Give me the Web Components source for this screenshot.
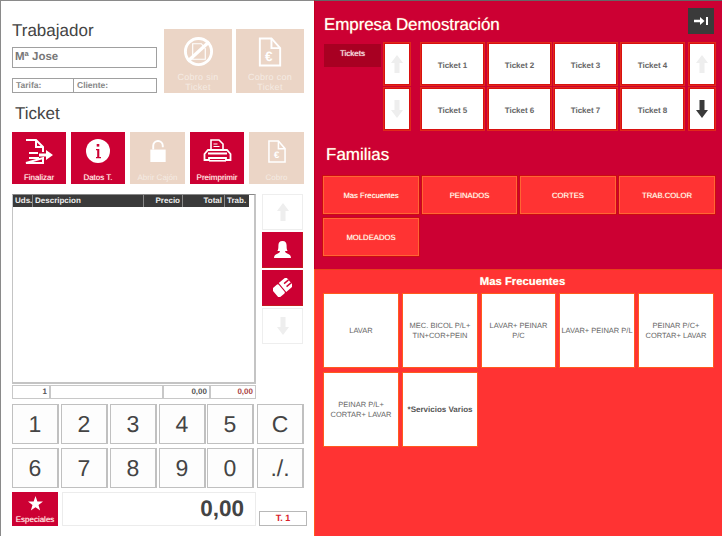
<!DOCTYPE html>
<html lang="es">
<head>
<meta charset="utf-8">
<title>TPV</title>
<style>
  html, body { margin: 0; padding: 0; background: #fff; }
  body { width: 722px; height: 536px; overflow: hidden; font-family: "Liberation Sans", Arial, sans-serif; text-rendering: geometricPrecision; }
</style>
</head>
<body>
<pos-app></pos-app>

<script>
/* Iconos compartidos */
const ICONS = {
  noticket: `<svg width="31" height="31" viewBox="0 0 32 32"><circle cx="16" cy="16" r="13.5" fill="none" stroke="currentColor" stroke-width="3"/><path d="M10 8h9l4 5v11H10z" fill="none" stroke="currentColor" stroke-width="1.2"/><path d="M5 26L27 6" stroke="currentColor" stroke-width="3.4"/></svg>`,
  euroDoc: `<svg width="24" height="30" viewBox="0 0 24 31"><path d="M1.5 1.5h12l9 10v18h-21z" fill="none" stroke="currentColor" stroke-width="2"/><path d="M13.500 1.500v10h9" fill="none" stroke="currentColor" stroke-width="2"/><text x="11" y="25" text-anchor="middle" font-family="Liberation Sans" font-weight="700" font-size="14" fill="currentColor">€</text></svg>`,
  euroDocSmall: `<svg width="18" height="23" viewBox="0 0 19 24"><path d="M1 1h10l7 8v14H1z" fill="none" stroke="currentColor" stroke-width="1.6"/><path d="M11 1v8h7" fill="none" stroke="currentColor" stroke-width="1.6"/><text x="9" y="19" text-anchor="middle" font-family="Liberation Sans" font-weight="700" font-size="10" fill="currentColor">€</text></svg>`,
  finish: `<svg width="29" height="25" viewBox="0 0 29 25"><path d="M1 1h10l7 7v5M18 19v5H1z" fill="none" stroke="currentColor" stroke-width="2"/><path d="M11 1v7h7" fill="none" stroke="currentColor" stroke-width="2"/><path d="M4 13h9v2H4zM4 18h10v2H4z" fill="currentColor"/><path d="M14 14.500h7V11l7 5-7 5v-3.500h-7z" fill="currentColor"/></svg>`,
  info: `<svg width="24" height="24" viewBox="0 0 24 24"><circle cx="12" cy="12" r="12" fill="currentColor"/><rect x="10.700" y="5" width="2.600" height="2.600" fill="#cc0033"/><path d="M10 10h3.300v8H15v1.300H10V18h1.200v-6.700H10z" fill="#cc0033"/></svg>`,
  lock: `<svg width="16" height="22" viewBox="0 0 16 23"><path d="M3 10V6a5 5 0 0 1 10 0v1.500" fill="none" stroke="currentColor" stroke-width="2"/><rect x="0" y="10" width="16" height="13" fill="currentColor"/></svg>`,
  printer: `<svg width="29" height="24" viewBox="0 0 29 24"><path d="M8 10V1h8l4 4v5" fill="none" stroke="currentColor" stroke-width="1.600"/><path d="M10.500 5h4M10.500 7.500h6" stroke="currentColor" stroke-width="1.200"/><path d="M5 11h19l3.500 4v6H23v-2H6v2H1.500v-6z" fill="none" stroke="currentColor" stroke-width="1.800"/><rect x="5" y="13.500" width="19" height="2" fill="currentColor"/><rect x="6" y="21" width="17" height="1.600" fill="currentColor"/></svg>`,
  person: `<svg width="17" height="17" viewBox="0 0 17 17"><path d="M8.500 0C11.500 0 12.600 2 12.600 4.500c0 2.500.2 4.500 1 5.500h-2.500c0 1.500 1 2 3 3 1.500.7 2.900 1.500 2.900 4H0c0-2.500 1.400-3.300 2.900-4 2-1 3-1.500 3-3H3.400c.8-1 1-3 1-5.500C4.400 2 5.500 0 8.500 0z" fill="currentColor"/></svg>`,
  eraser: `<svg width="19" height="19" viewBox="0 0 18 18"><g transform="rotate(50 9 9)"><rect x="3.500" y="0" width="11" height="9" fill="currentColor"/><rect x="3.500" y="10" width="11" height="8" rx="1.500" fill="currentColor"/><rect x="6.500" y="0" width="1.300" height="5.500" fill="#cc0033"/><rect x="10.200" y="0" width="1.300" height="5.500" fill="#cc0033"/></g></svg>`,
  up: `<svg width="12" height="18" viewBox="0 0 12 18"><path d="M6 0l6 8H8.500v10h-5V8H0z" fill="currentColor"/></svg>`,
  down: `<svg width="12" height="18" viewBox="0 0 12 18"><path d="M6 18L0 10h3.500V0h5v10H12z" fill="currentColor"/></svg>`,
  exit: `<svg width="14" height="8" viewBox="0 0 14 8"><path d="M0 2.800h6V0l4.500 4L6 8V5.200H0z" fill="currentColor"/><rect x="12" y="0" width="2" height="8" fill="currentColor"/></svg>`,
  star: `<svg width="15" height="15" viewBox="0 0 24 24"><path d="M12 0l3 8.600 9 .2-7.200 5.500 2.600 8.700L12 17.800 4.600 23l2.600-8.700L0 8.800l9-.2z" fill="currentColor"/></svg>`
};

/* Boton con icono y texto: Finalizar, Datos T., Cobro... */
class PosTile extends HTMLElement {
  connectedCallback() {
    const off = this.hasAttribute('off');
    const icon = ICONS[this.getAttribute('icon')] || '';
    this.attachShadow({ mode: 'open' }).innerHTML = `
      <style>
        :host { display: flex; box-sizing: border-box; flex-direction: column; align-items: center;
                background: ${off ? '#ebd5c6' : '#cc0033'}; color: #fff;
                font-size: 8px; line-height: 10px; text-align: center; overflow: hidden; }
        .i { height: var(--icon-h, 36px); display: flex; align-items: center; justify-content: center; flex: none; }
        .t { margin-top: var(--label-gap, 0); color: ${off ? '#f5ebe3' : '#fff0f0'}; ${off ? '' : 'text-shadow: 0 0 1px #ff9090;'} }
      </style>
      <div class="i">${icon}</div><div class="t"><slot></slot></div>`;
  }
}
customElements.define('pos-tile', PosTile);

/* Boton cuadrado con una flecha u otro icono */
class PosArrow extends HTMLElement {
  connectedCallback() {
    const icon = ICONS[this.getAttribute('icon')];
    this.attachShadow({ mode: 'open' }).innerHTML = `
      <style>
        :host { display: flex; box-sizing: border-box; align-items: center; justify-content: center;
                background: #fff; color: #eeeeee; border: 1px solid #eeeeee; }
        :host([on]) { color: #3a3a3a; }
        :host([solid]) { background: #cc0033; color: #fff; border: 0; border-right: 1px solid #c41a20; border-bottom: 1px solid #c41a20; }
        :host([framed]) { border: 1px solid #d81010; outline: 1px solid #e02a1a; outline-offset: 0; }
      </style>${icon}`;
  }
}
customElements.define('pos-arrow', PosArrow);

/* Cabecera de seccion */
class PosHeading extends HTMLElement {
  constructor() {
    super();
    this.attachShadow({ mode: 'open' }).innerHTML = `
      <style>
        :host { display: block; font-size: 17px; line-height: 20px; color: #444; }
        :host([light]) { color: #fff; text-shadow: 0 0 1px #ffb060; }
      </style><slot></slot>`;
  }
}
customElements.define('pos-heading', PosHeading);

/* Trabajador, tarifa y cliente */
class PosWorker extends HTMLElement {
  constructor() {
    super();
    this.attachShadow({ mode: 'open' }).innerHTML = `
      <style>
        :host { display: block; width: 145px; }
        pos-heading { margin-top: 20px; }
        .name { box-sizing: border-box; height: 21px; margin-top: 6px; border: 1px solid #a0a0a0; padding-left: 2px;
                font-size: 11.5px; font-weight: bold; line-height: 19px; color: #777; }
        .meta { box-sizing: border-box; display: grid; grid-template-columns: 60px 1fr; height: 15px; margin-top: 10px;
                border: 1px solid #a0a0a0; font-size: 8.5px; font-weight: bold; line-height: 13px; color: #888; }
        .meta span { padding-left: 3px; }
        .meta span + span { border-left: 1px solid #a0a0a0; }
      </style>
      <pos-heading>Trabajador</pos-heading>
      <div class="name">Mª Jose</div>
      <div class="meta"><span>Tarifa:</span><span>Cliente:</span></div>`;
  }
}
customElements.define('pos-worker', PosWorker);

/* Tabla de lineas del ticket */
class PosTable extends HTMLElement {
  constructor() {
    super();
    const head = [['Uds.', 'l'], ['Descripcion', 'l'], ['Precio', 'r'], ['Total', 'r'], ['Trab.', 'l']];
    this.attachShadow({ mode: 'open' }).innerHTML = `
      <style>
        :host { display: block; width: 244px; font-size: 8px; font-weight: bold; }
        .body { box-sizing: border-box; height: 190px; border: 1px solid #c4c4c4; border-top-color: #888; border-right-width: 2px; border-bottom-width: 2px; }
        .head { display: grid; grid-template-columns: 20px 111px 39px 42px 23px; height: 12px; background: #3a3a3a; margin-right: 5px;
                color: #eee; line-height: 12px; }
        .head span { padding: 0 2px; border-right: 1px solid #888; overflow: hidden; white-space: nowrap; }
        .head span:last-child { border-right: 0; }
        .r { text-align: right; }
        .foot { display: grid; grid-template-columns: 38px 113px 47px 46px; height: 14px; margin-top: 1px; color: #555; line-height: 12px; }
        .foot span { box-sizing: border-box; border: 1px solid #c8c8c8; padding-right: 2px; text-align: right; }
        .foot span:last-child { color: #a44; }
      </style>
      <div class="body"><div class="head">${head.map(h => `<span class="${h[1]}">${h[0]}</span>`).join('')}</div></div>
      <div class="foot"><span>1</span><span></span><span>0,00</span><span>0,00</span></div>`;
  }
}
customElements.define('pos-table', PosTable);

/* Teclado numerico */
class PosKeypad extends HTMLElement {
  constructor() {
    super();
    const keys = ['1', '2', '3', '4', '5', 'C', '6', '7', '8', '9', '0', './.'];
    this.attachShadow({ mode: 'open' }).innerHTML = `
      <style>
        :host { display: grid; grid-template-columns: 49px 49px 49px 48px 50px 47px; grid-auto-rows: 40px; row-gap: 4px; margin-top: 5px; }
        div { box-sizing: border-box; width: 47px; display: flex; align-items: center; justify-content: center;
              border: 1px solid #c0c0c0; border-right-width: 2px; background: #fdfdfd; color: #444; font-size: 23px; }
      </style>
      ${keys.map(k => `<div>${k}</div>`).join('')}`;
  }
}
customElements.define('pos-keypad', PosKeypad);

/* Barra inferior: especiales, importe y numero de ticket */
class PosTotals extends HTMLElement {
  constructor() {
    super();
    this.attachShadow({ mode: 'open' }).innerHTML = `
      <style>
        :host { display: grid; grid-template-columns: 46px 194px 47px; column-gap: 4px; height: 34px; margin-top: 4px; }
        pos-tile { --icon-h: 22px; --label-gap: 1px; }
        .amount { box-sizing: border-box; border: 1px solid #ececec; padding-right: 11px; text-align: right;
                  font-size: 22.5px; font-weight: bold; line-height: 32px; color: #444; }
        .num { box-sizing: border-box; align-self: end; height: 15px; margin-left: -1px; border: 1px solid #b8b8b8; text-align: center;
               font-size: 9px; font-weight: bold; line-height: 13px; color: #d8222a; }
      </style>
      <pos-tile icon="star">Especiales</pos-tile>
      <div class="amount">0,00</div>
      <div class="num">T. 1</div>`;
  }
}
customElements.define('pos-totals', PosTotals);

/* Columna izquierda */
class PosLeft extends HTMLElement {
  constructor() {
    super();
    this.attachShadow({ mode: 'open' }).innerHTML = `
      <style>
        :host { display: block; box-sizing: border-box; width: 314px; height: 536px; padding: 0 10px 0 11px; background: #fff;
                border-left: 1px solid #8a8a8a; border-top: 1px solid #8a8a8a; }
        .top { display: flex; }
        .cobros { display: grid; grid-template-columns: 68px 68px; column-gap: 4px; grid-auto-rows: 64px; margin: 28px 0 0 7px; }
        .cobros pos-tile { --icon-h: 41px; padding-top: 2px; font-size: 9px; line-height: 10px; letter-spacing: .3px; }
        .ticket { margin: 11px 0 0 3px; }
        .actions { display: grid; grid-template-columns: 54px 54px 55px 54px 55px; column-gap: 5px; height: 52px; margin-top: 8px; }
        .actions pos-tile { --icon-h: 32px; --label-gap: 6px; padding-top: 3px; }
        .mid { display: flex; margin-top: 10px; }
        .side { display: grid; grid-template-columns: 41px; grid-auto-rows: 36px; row-gap: 2px; margin-left: 6px; align-content: start; }
        .side pos-arrow { height: 36px; }
      </style>
      <div class="top">
        <pos-worker></pos-worker>
        <div class="cobros">
          <pos-tile off icon="noticket">Cobro sin<br>Ticket</pos-tile>
          <pos-tile off icon="euroDoc">Cobro con<br>Ticket</pos-tile>
        </div>
      </div>
      <pos-heading class="ticket">Ticket</pos-heading>
      <div class="actions">
        <pos-tile icon="finish">Finalizar</pos-tile>
        <pos-tile icon="info">Datos T.</pos-tile>
        <pos-tile off icon="lock">Abrir Cajón</pos-tile>
        <pos-tile icon="printer">Preimprimir</pos-tile>
        <pos-tile off icon="euroDocSmall">Cobro</pos-tile>
      </div>
      <div class="mid">
        <pos-table></pos-table>
        <div class="side">
          <pos-arrow icon="up"></pos-arrow>
          <pos-arrow solid icon="person"></pos-arrow>
          <pos-arrow solid icon="eraser"></pos-arrow>
          <pos-arrow icon="down"></pos-arrow>
        </div>
      </div>
      <pos-keypad></pos-keypad>
      <pos-totals></pos-totals>`;
  }
}
customElements.define('pos-left', PosLeft);

/* Selector de tickets abiertos */
class PosTickets extends HTMLElement {
  constructor() {
    super();
    const names = ['Ticket 1', 'Ticket 2', 'Ticket 3', 'Ticket 4', 'Ticket 5', 'Ticket 6', 'Ticket 7', 'Ticket 8'];
    this.attachShadow({ mode: 'open' }).innerHTML = `
      <style>
        :host { display: grid; grid-template-columns: 57px 26px 5px 64px 63px 64px 65px 26px; grid-template-rows: 42px 42px;
                column-gap: 3px; row-gap: 3px; margin-top: 8px; }
        .tab { grid-row: 1; grid-column: 1; height: 23px; margin-top: 1px; background: #a80022; color: #f6dcdc; font-size: 8px;
               line-height: 19px; text-align: center; text-shadow: 0 0 1px #fff; }
        .tk { box-sizing: border-box; width: 63px; display: flex; align-items: center; justify-content: center; padding-top: 2px; background: #fff;
              border: 1px solid #d81010; outline: 1px solid #e02a1a; color: #666; font-size: 8px; font-weight: bold; }
      </style>
      <div class="tab">Tickets</div>
      <pos-arrow framed style="grid-row:1;grid-column:2" icon="up"></pos-arrow>
      <pos-arrow framed style="grid-row:2;grid-column:2" icon="down"></pos-arrow>
      ${names.map((n, i) => `<div class="tk" style="grid-row:${i < 4 ? 1 : 2};grid-column:${(i % 4) + 4}">${n}</div>`).join('')}
      <pos-arrow framed style="grid-row:1;grid-column:8" icon="up"></pos-arrow>
      <pos-arrow framed on style="grid-row:2;grid-column:8" icon="down"></pos-arrow>`;
  }
}
customElements.define('pos-tickets', PosTickets);

/* Botones de familia */
class PosFamilies extends HTMLElement {
  constructor() {
    super();
    const names = ['Mas Frecuentes', 'PEINADOS', 'CORTES', 'TRAB.COLOR', 'MOLDEADOS'];
    this.attachShadow({ mode: 'open' }).innerHTML = `
      <style>
        :host { display: grid; grid-template-columns: 96px 95px 96px 96px; grid-auto-rows: 38px; column-gap: 3px; row-gap: 4px; margin: 11px 0 0 -1px; }
        div { box-sizing: border-box; display: flex; align-items: center; justify-content: center; background: #ff3333;
              border: 1px solid #ff6633; outline: 1px solid #cc0a14; color: #fff; font-size: 7.7px; text-shadow: 0 0 1px #ffc080; }
      </style>
      ${names.map(n => `<div>${n}</div>`).join('')}`;
  }
}
customElements.define('pos-families', PosFamilies);

/* Articulos de la familia */
class PosProducts extends HTMLElement {
  constructor() {
    super();
    const items = ['LAVAR', 'MEC. BICOL P/L+<br>TIN+COR+PEIN', 'LAVAR+ PEINAR<br>P/C', 'LAVAR+ PEINAR P/L', 'PEINAR P/C+<br>CORTAR+ LAVAR', 'PEINAR P/L+<br>CORTAR+ LAVAR', '*Servicios Varios'];
    this.attachShadow({ mode: 'open' }).innerHTML = `
      <style>
        :host { display: grid; grid-template-columns: 76px 76px 75px 76px 76px; grid-auto-rows: 75px; column-gap: 3px; row-gap: 4px; margin-top: 4px; }
        div { box-sizing: border-box; display: flex; align-items: center; justify-content: center; background: #fff;
              border: 1px solid #ff5a1e; color: #666; font-size: 7.5px; line-height: 10px; text-align: center; white-space: nowrap; }
        div:last-child { font-size: 8px; font-weight: bold; color: #555; }
      </style>
      ${items.map(n => `<div><span>${n}</span></div>`).join('')}`;
  }
}
customElements.define('pos-products', PosProducts);

/* Columna derecha */
class PosRight extends HTMLElement {
  constructor() {
    super();
    this.attachShadow({ mode: 'open' }).innerHTML = `
      <style>
        :host { display: flex; flex-direction: column; width: 408px; height: 536px; box-sizing: border-box; }
        .top { box-sizing: border-box; height: 269px; padding: 0 8px 0 9px; background: #cc0033; border-top: 1px solid #666; border-left: 1px solid #c00020; }
        .title { display: flex; justify-content: space-between; align-items: flex-start; }
        .title pos-heading { margin: 14px 0 0; letter-spacing: -.1px; }
        .exit { display: flex; align-items: center; justify-content: center; width: 26px; height: 26px; margin-top: 7px; background: #3a3a3a; color: #fff; }
        .fam { margin: 15px 0 0 2px; }
        .bottom { flex: 1; box-sizing: border-box; padding: 5px 0 0 8px; background: #ff3333; border-top: 1px solid #e8401a; border-left: 1px solid #ff5a1e; }
        .bottom h3 { margin: 0; font-size: 11.3px; line-height: 14px; font-weight: bold; text-align: center; color: #fff; text-shadow: 0 0 1px #ffc080; }
      </style>
      <section class="top">
        <div class="title">
          <pos-heading light>Empresa Demostración</pos-heading>
          <div class="exit">${ICONS.exit}</div>
        </div>
        <pos-tickets></pos-tickets>
        <pos-heading light class="fam">Familias</pos-heading>
        <pos-families></pos-families>
      </section>
      <section class="bottom">
        <h3>Mas Frecuentes</h3>
        <pos-products></pos-products>
      </section>`;
  }
}
customElements.define('pos-right', PosRight);

class PosApp extends HTMLElement {
  constructor() {
    super();
    this.attachShadow({ mode: 'open' }).innerHTML = `
      <style>:host { display: flex; width: 722px; height: 536px; overflow: hidden; }</style>
      <pos-left></pos-left><pos-right></pos-right>`;
  }
}
customElements.define('pos-app', PosApp);
</script>
</body>
</html>
